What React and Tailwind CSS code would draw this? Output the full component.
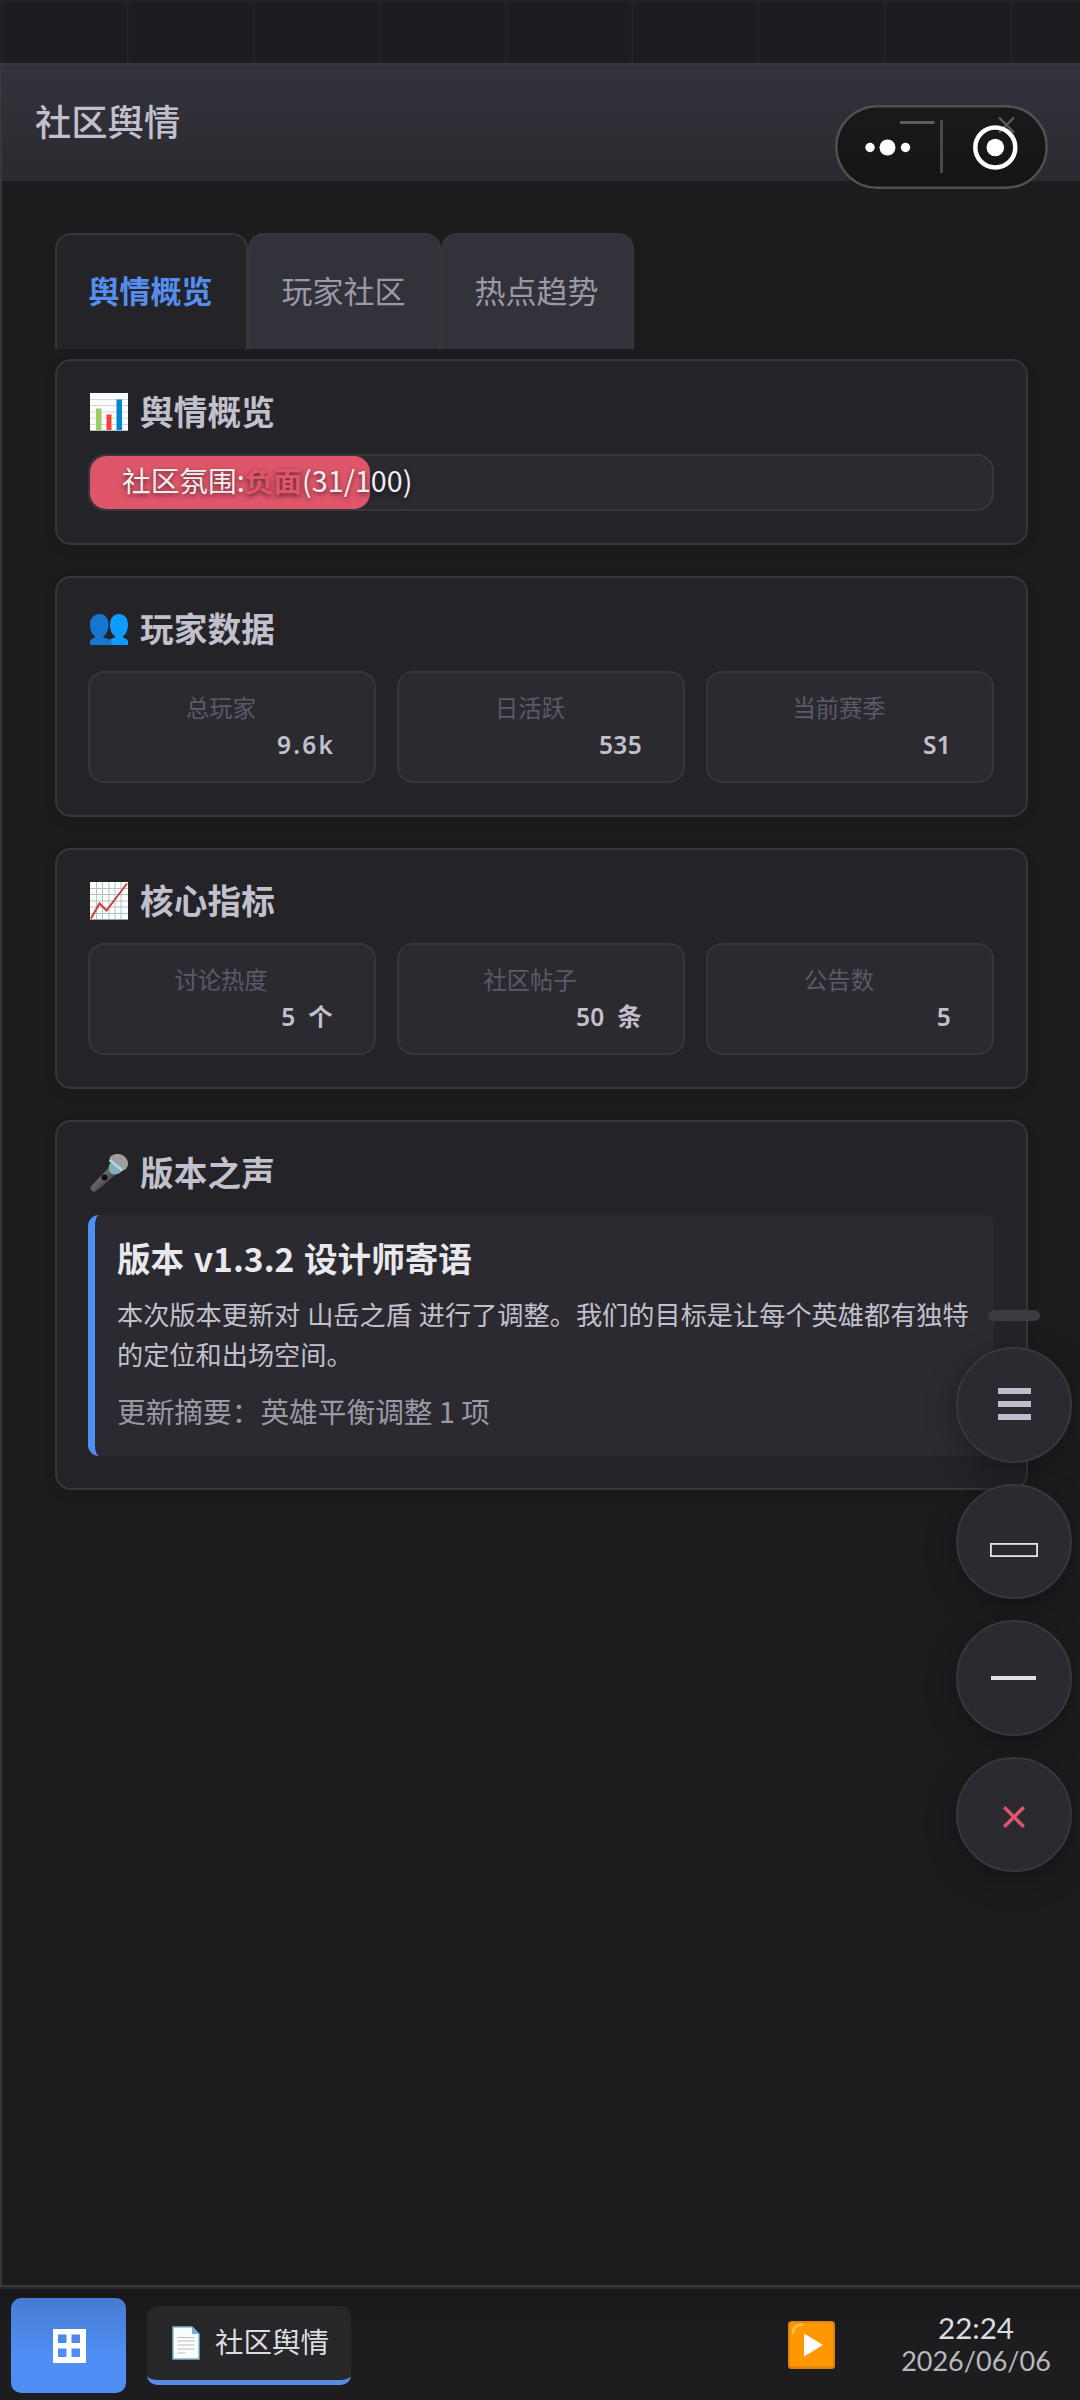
import { useState } from 'react';

const TABS = ['舆情概览', '玩家社区', '热点趋势'];

const PLAYER_STATS = [
  { label: '总玩家', value: '9.6k', spacing: 'tracking-[2.2px] pr-[39px]' },
  { label: '日活跃', value: '535' },
  { label: '当前赛季', value: 'S1' },
];

const CORE_STATS = [
  { label: '讨论热度', value: '5 个' },
  { label: '社区帖子', value: '50 条' },
  { label: '公告数', value: '5' },
];

const mood = { label: '负面', score: 31 };

const BarChartIcon = () => (
  <svg width="38" height="38" viewBox="0 0 38 38">
    <rect width="38" height="38" fill="#fdfdfd" />
    <path d="M0 6.5h38M0 12.5h38M0 19h38M0 25h38M0 31.500h38" stroke="#cfd8dc" strokeWidth="1" />
    <rect x="6" y="15.500" width="5.500" height="21.500" fill="#9ccc65" />
    <rect x="16.500" y="21.500" width="5" height="15.500" fill="#f44336" />
    <rect x="26.500" y="6.500" width="5.500" height="30.500" fill="#0288d1" />
    <path d="M0 37.500h38" stroke="#b0bec5" />
  </svg>
);

const PeopleIcon = () => (
  <svg width="38" height="38" viewBox="0 0 38 38">
    <path d="M29 4c5.500 0 9 4.500 9 10.500 0 6-2.500 10.500-5 11.500v1.500c2 1 5 1.500 5 4V35H19v-3.500c0-2.500 3.500-3 6-4V26c-3-1.500-5-5.500-5-11.500C20 8.500 23.500 4 29 4z" fill="#0f9bfb" />
    <path d="M9.500 4c5.500 0 9 4.500 9 10.500 0 6-2.500 10.500-5 11.500v1.500c3 1 8 1.500 8 5V35H0v-3.500c0-2.500 3-3 5-4V26c-2.500-1-5-5.500-5-11.500C0 8.500 4 4 9.500 4z" fill="#1577d2" />
  </svg>
);

const TrendIcon = () => (
  <svg width="38" height="38" viewBox="0 0 38 38">
    <rect width="38" height="38" fill="#fdfdfd" />
    <path d="M0 6.500h38M0 12.500h38M0 19h38M0 25h38M0 31.500h38M6.500 0v38M12.500 0v38M19 0v38M25 0v38M31 0v38" stroke="#b0c4c4" strokeWidth="1" />
    <path d="M1 36.500L9.500 21.500L16.500 28.500L37 1.500" fill="none" stroke="#c8403e" strokeWidth="2" />
    <path d="M0 37.500h38" stroke="#90a4a4" />
  </svg>
);

const MicIcon = () => (
  <svg width="38" height="38" viewBox="0 0 38 38">
    <defs>
      <linearGradient id="handle" x1="0" y1="0" x2="1" y2="1">
        <stop offset="0.300" stopColor="#757575" />
        <stop offset="0.700" stopColor="#444" />
      </linearGradient>
    </defs>
    <path d="M18.500 14L25.500 21L5.500 37.500C3 38.500-1 35.500 1 32.500z" fill="url(#handle)" />
    <path d="M22 7C19 10 18 13 19 16c1 3 3 4.500 6 4.500 3 0 5-1 7.500-4.500z" fill="#82aeb8" />
    <path d="M20 3C25-1.500 32-1 36 4c3 4 2.500 8-.5 11.500-2 1-3 1-5-.5L20.500 6.500C19.500 5 19.500 4 20 3z" fill="#9e9e9e" />
    <path d="M19.500 6L32.500 16.500" stroke="#a9dbe4" strokeWidth="2.500" />
    <circle cx="14.500" cy="23.500" r="3" fill="#0e0e0e" />
  </svg>
);

const DocumentIcon = () => (
  <svg width="28" height="34" viewBox="0 0 28 34">
    <path d="M1 1h19l7 7v25H1z" fill="#fafcfd" stroke="#7fb7d4" strokeWidth="1.400" />
    <path d="M20 1l7 7h-7z" fill="#6fb0e0" />
    <path d="M5.500 11.500h17M5.500 15h17M5.500 19h17M5.500 23h17M5.500 27h8" stroke="#b9bdc0" strokeWidth="1.200" />
  </svg>
);

const PlayIcon = () => (
  <svg width="47" height="48" viewBox="0 0 47 48">
    <rect width="47" height="48" rx="3.500" fill="#dd8114" />
    <rect x="1.500" y="1.500" width="43.500" height="44" rx="3" fill="#ff9800" />
    <path d="M5 12C5 7 8.500 4 14 3.500" fill="none" stroke="#ffbd52" strokeWidth="2.500" strokeLinecap="round" />
    <path d="M16 12.500L35 24L16 35.500z" fill="#fdfdfd" />
  </svg>
);

const StartIcon = () => (
  <svg width="33" height="34" viewBox="0 0 33 34">
    <path fillRule="evenodd" d="M0 0h33v34H0zM5 5.500v8.500h8.500V5.500zM18.500 5.500v8.500H27V5.500zM5 19.500V28h8.500v-8.500zM18.500 19.500V28H27v-8.500z" fill="#fff" />
  </svg>
);

const Card = ({ icon, title, children }) => (
  <section className="rounded-2xl border-2 border-[#37373b] bg-[#232328] pb-[32px] pl-[31px] pr-[32px] shadow-[0_4px_12px_rgba(0,0,0,0.1)]">
    <h2 className="flex h-[93px] items-center gap-[12px] pt-[9px] text-[33.6px] font-bold leading-none text-[#c2c0cc]">
      <span className="w-[38px] pl-[2px]">{icon}</span>
      <span className="-mt-[3px] pl-[2px] tracking-[0.2px]">{title}</span>
    </h2>
    {children}
  </section>
);

const StatGrid = ({ stats }) => (
  <div className="grid grid-cols-3 gap-[21px]">
    {stats.map((stat) => (
      <div
        key={stat.label}
        className="flex h-[112px] flex-col rounded-2xl border-2 border-[#37373b] bg-[#2b2a31] pt-[16px]"
      >
        <span className="pr-[22px] text-center text-[23.3px] leading-[36px] text-[#5c5a66]">{stat.label}</span>
        <span
          className={`text-right font-['Noto_Sans','Noto_Sans_CJK_SC',sans-serif] text-[24.5px] font-semibold leading-[40px] [word-spacing:6px] text-[#c2c0cc] ${
            stat.spacing || 'tracking-[0.3px] pr-[41px]'
          }`}
        >
          {stat.value}
        </span>
      </div>
    ))}
  </div>
);

const FloatButton = ({ children }) => (
  <button className="flex size-[115.5px] items-center justify-center rounded-full border-2 border-[#37373c] bg-[#2b2a31] shadow-[0_8px_32px_rgba(0,0,0,0.3)]">
    {children}
  </button>
);

const FloatingControls = () => (
  <div className="absolute left-[956px] top-[1310px] flex flex-col items-center">
    <div className="mb-[26px] h-[11px] w-[52px] rounded-full bg-[#3a3a41]" />
    <div className="flex flex-col gap-[21px]">
      <FloatButton>
        <svg width="33" height="32" viewBox="0 0 33 32" className="-mt-[2px] ml-[1px]">
          <path d="M0 3h33M0 16h33M0 29h33" stroke="#bfbdcb" strokeWidth="5.800" />
        </svg>
      </FloatButton>
      <FloatButton>
        <svg width="48" height="14" viewBox="0 0 48 14" className="mt-[17px]">
          <rect x="0.900" y="0.900" width="46.200" height="12.200" fill="none" stroke="#e2e2e6" strokeWidth="1.800" />
        </svg>
      </FloatButton>
      <FloatButton>
        <svg width="45" height="4" viewBox="0 0 45 4" className="mr-[1px]">
          <path d="M0 2h45" stroke="#e2e2e6" strokeWidth="4" />
        </svg>
      </FloatButton>
      <FloatButton>
        <svg width="22" height="22" viewBox="0 0 22 22" className="mt-[5px]">
          <path d="M1.200 1.200L20.800 20.800M20.800 1.200L1.200 20.800" stroke="#dd566b" strokeWidth="3.500" />
        </svg>
      </FloatButton>
    </div>
  </div>
);

// Mini-program capsule with the window's own minimise / close glyphs showing through
const Capsule = () => (
  <div className="absolute left-[835px] top-[105px] h-[84px] w-[213px] rounded-full bg-gradient-to-b from-[#1a1a1d] to-[#141416]">
    <svg width="213" height="84" viewBox="0 0 213 84">
      <rect x="1.250" y="1.250" width="210.500" height="81.500" rx="40.750" fill="none" stroke="#515153" strokeWidth="2.500" />
      <path d="M65 17.500h34.500" stroke="#5c5c61" strokeWidth="3" />
      <path d="M164 12.500l15 15M179 12.500l-15 15" stroke="#5c5c61" strokeWidth="2.200" />
      <path d="M106.500 15v53" stroke="#48484a" strokeWidth="3" />
      <circle cx="35" cy="42.500" r="4.700" fill="#fff" />
      <circle cx="52.500" cy="42.500" r="8" fill="#fff" />
      <circle cx="70.500" cy="42.500" r="4.700" fill="#fff" />
      <circle cx="160.300" cy="42.500" r="20" fill="none" stroke="#fff" strokeWidth="4.500" />
      <circle cx="160.300" cy="42.500" r="8.800" fill="#fff" />
    </svg>
  </div>
);

const Taskbar = () => (
  <footer className="flex h-[113px] items-start border-t-2 border-[#29292c] bg-gradient-to-b from-[#18181a] to-[#1d1d1f] to-40%">
    <button className="ml-[11px] mt-[9px] flex h-[95px] w-[115px] items-center justify-center rounded-[10px] bg-gradient-to-b from-[#477bcf] to-[#4f8ff5] to-60%">
      <span className="pl-[1px] pt-[1px]">
        <StartIcon />
      </span>
    </button>
    <button className="ml-[21px] mt-[17px] flex h-[79px] w-[204px] items-center rounded-[10px] border-b-[5px] border-[#588be2] bg-[#27272a] pl-[25px]">
      <DocumentIcon />
      <span className="-mt-[3px] pl-[15px] text-[28.5px] text-[#dddde1]">社区舆情</span>
    </button>
    <div className="ml-auto flex">
      <span className="mt-[32px]">
        <PlayIcon />
      </span>
      <div className="ml-[66px] mr-[29px] mt-[20px] flex w-[150px] flex-col items-center whitespace-nowrap font-[Lato,sans-serif]">
        <span className="text-[29.5px] leading-[37px] text-[#dddde1]">22:24</span>
        <span className="text-[27px] leading-[30px] text-[#b9b9bd]">2026/06/06</span>
      </div>
    </div>
  </footer>
);

const App = () => {
  const [activeTab, setActiveTab] = useState(TABS[0]);

  return (
    <div className="relative flex h-[2400px] w-[1080px] flex-col overflow-hidden bg-[#1c1c1e] font-['Noto_Sans_CJK_SC',sans-serif]">
      <div className="h-[63px] shrink-0 bg-[#1d1c20] bg-[linear-gradient(to_right,#222226_3px,transparent_3px),linear-gradient(to_bottom,#222226_3px,transparent_3px)] bg-[size:126.2px_126.2px]" />

      <main className="flex h-[2224px] shrink-0 flex-col border-2 border-r-0 border-[#37373c] bg-[#1c1c1e]">
        <header className="flex h-[116px] shrink-0 items-center bg-gradient-to-b from-[#33333d] to-[#2b2a30] pb-[5px] pl-[33px] text-[36.3px] font-medium leading-none text-[#c2c0cc]">
          社区舆情
        </header>

        <div className="pl-[53px] pr-[52px] pt-[52px]">
          <nav className="flex h-[116px]">
            {TABS.map((tab) => (
              <button
                key={tab}
                onClick={() => setActiveTab(tab)}
                className={`w-[193px] rounded-t-2xl border-2 border-b-0 border-[#37373b] pb-[6px] pr-[2px] text-[31px] leading-none ${
                  tab === activeTab ? 'bg-[#232328] font-bold text-[#568eee]' : 'bg-[#32323a] text-[#9b99a6]'
                }`}
              >
                {tab}
              </button>
            ))}
          </nav>

          <div className="mt-[10px] flex flex-col gap-[31px]">
            <Card icon={<BarChartIcon />} title="舆情概览">
              <div className="relative h-[57px] overflow-hidden rounded-[17px] border-2 border-[#37373b] bg-[#2b2a31]">
                <div className="h-full rounded-[16px] bg-[#df566a]" style={{ width: `${mood.score}%` }} />
                <span className="absolute inset-0 flex items-center whitespace-nowrap pb-[4px] pl-[32px] text-[28.7px] leading-none text-[#f0eff2] [text-shadow:0_2px_5px_rgba(0,0,0,0.6)]">
                  社区氛围:
                  <span className="font-bold text-[#df566a]">{mood.label}</span>
                  <span>({mood.score}/100)</span>
                </span>
              </div>
            </Card>

            <Card icon={<PeopleIcon />} title="玩家数据">
              <StatGrid stats={PLAYER_STATS} />
            </Card>

            <Card icon={<TrendIcon />} title="核心指标">
              <StatGrid stats={CORE_STATS} />
            </Card>

            <Card icon={<MicIcon />} title="版本之声">
              <div className="h-[241px] rounded-[11px] border-l-[7px] border-[#4f8ff5] bg-[#2b2a30] pl-[22px] pt-[18px]">
                <h3 className="text-[33.6px] font-bold leading-[50px] text-[#e9e9ed] [word-spacing:2px]">版本 v1.3.2 设计师寄语</h3>
                <p className="w-[862px] pt-[11px] text-[26.2px] leading-[40px] text-[#c2c0cc] [word-spacing:1px]">
                  本次版本更新对 山岳之盾 进行了调整。我们的目标是让每个英雄都有独特的定位和出场空间。
                </p>
                <p className="pt-[17px] text-[28.7px] leading-[40px] text-[#9b99a6]">
                  更新摘要：英雄平衡调整 1 项
                </p>
              </div>
            </Card>
          </div>
        </div>
      </main>

      <Taskbar />
      <Capsule />
      <FloatingControls />
    </div>
  );
};

export default App;
